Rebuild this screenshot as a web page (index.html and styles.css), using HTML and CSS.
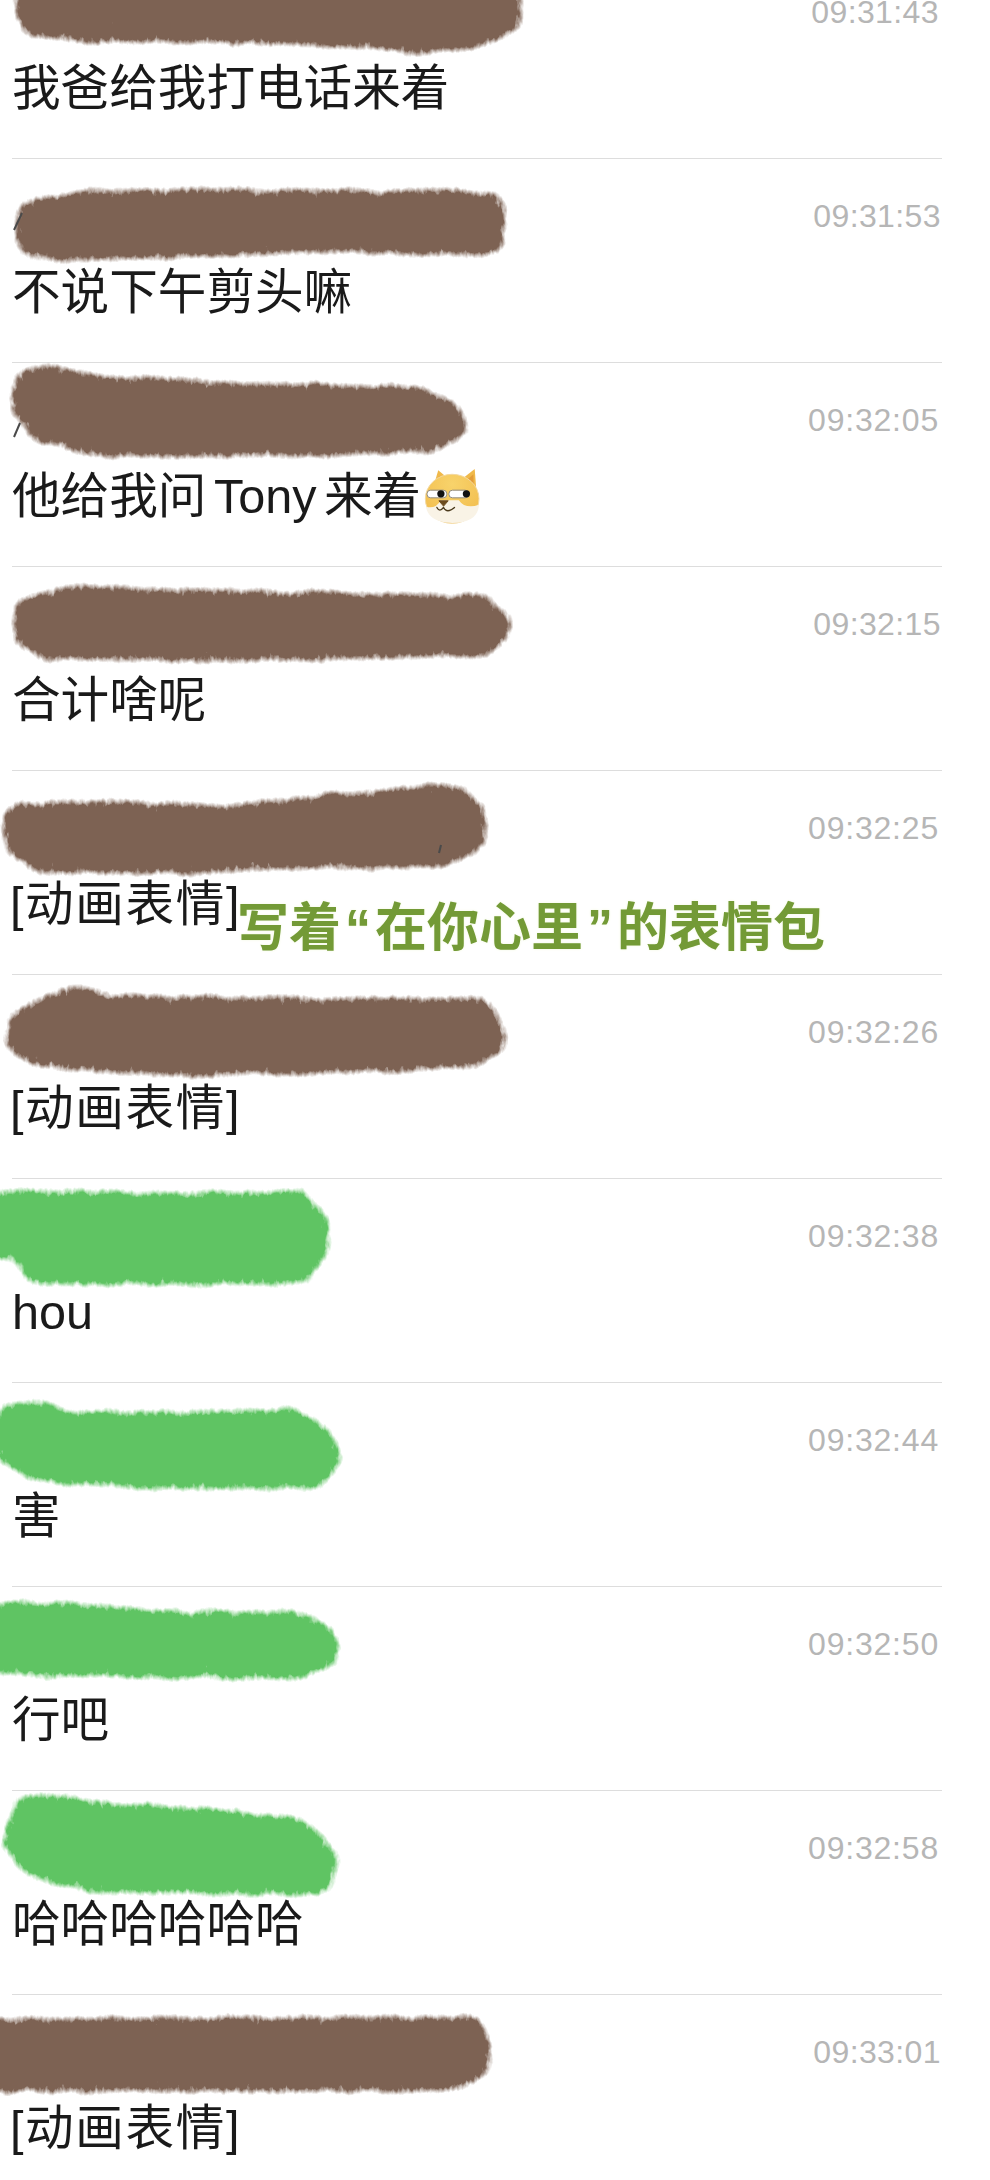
FILE: index.html
```html
<!DOCTYPE html>
<html lang="zh-CN">
<head>
    <meta charset="UTF-8">
    <meta name="viewport" content="width=device-width, initial-scale=1.0">
    <title>聊天记录</title>
    <link rel="stylesheet" href="styles.css">
</head>
<body>
    <!-- shared filter for the painted-over names -->
    <svg class="defs" width="0" height="0" aria-hidden="true">
        <defs>
            <filter id="fur" x="-10%" y="-50%" width="120%" height="200%" color-interpolation-filters="sRGB">
                <feTurbulence type="fractalNoise" baseFrequency="0.05 0.09" numOctaves="2" seed="7" result="wobble"/>
                <feDisplacementMap in="SourceGraphic" in2="wobble" scale="10" xChannelSelector="R" yChannelSelector="G" result="moved"/>
                <feGaussianBlur in="moved" stdDeviation="6" result="soft"/>
                <feTurbulence type="fractalNoise" baseFrequency="0.2 0.1" numOctaves="3" seed="3" result="grain"/>
                <feColorMatrix in="grain" type="matrix" values="0 0 0 0 0  0 0 0 0 0  0 0 0 0 0  1 0 0 0 0" result="grainAlpha"/>
                <feComposite in="soft" in2="grainAlpha" operator="arithmetic" k1="2" k2="0.8" k3="0" k4="-0.3" result="mix"/>
                <feComponentTransfer in="mix" result="mask">
                    <feFuncA type="linear" slope="1.6" intercept="0"/>
                </feComponentTransfer>
                <feMorphology in="SourceGraphic" operator="dilate" radius="20" result="paint"/>
                <feComposite in="paint" in2="mask" operator="in"/>
            </filter>
            <radialGradient id="dogFace" cx="50%" cy="20%" r="75%">
                <stop offset="0" stop-color="#f8d36b"/>
                <stop offset="1" stop-color="#f2bd4e"/>
            </radialGradient>
        </defs>
    </svg>

    <div class="list">
        <div class="row">
            <svg class="smear" viewBox="0 -45 990 204"><polygon class="brown" filter="url(#fur)" points="28,-20 505,-20 505,18 470,32 420,36 300,28 100,26 35,20"/></svg>
            <div class="time time-mid">09:31:43</div>
            <div class="msg">我爸给我打电话来着</div>
        </div>
        <div class="row">
            <svg class="smear" viewBox="0 159 990 204"><polygon class="brown" filter="url(#fur)" points="33,215 100,207 200,205 300,207 488,208 488,240 350,235 60,245 33,240"/><path class="residue" d="M22 213 L14 230"/></svg>
            <div class="time time-wide">09:31:53</div>
            <div class="msg">不说下午剪头嘛</div>
        </div>
        <div class="row">
            <svg class="smear" viewBox="0 363 990 204"><polygon class="brown" filter="url(#fur)" points="30,385 48,380 90,392 200,398 300,400 420,403 450,422 450,428 425,436 300,440 100,440 42,425 27,405"/><path class="residue" d="M20 423 L14 437"/></svg>
            <div class="time">09:32:05</div>
            <div class="msg msg-tight">他给我问 Tony 来着<svg class="dog" viewBox="70 80 175 170">
                <polygon points="100,140 116,86 155,118" fill="#f0b94a"/>
                <polygon points="118,104 110,132 136,118" fill="#e39c38"/>
                <polygon points="178,120 226,82 232,160" fill="#f0b94a"/>
                <polygon points="206,112 222,98 223,138" fill="#e39c38"/>
                <ellipse cx="158" cy="172" rx="81" ry="74" fill="url(#dogFace)" stroke="#f3d9a0" stroke-width="3"/>
                <path d="M79 196 Q108 204 124 176 L178 176 Q198 204 239 190 Q236 244 158 245 Q86 242 79 196Z" fill="#f9f3e6"/>
                <rect x="82" y="146" width="60" height="23" rx="11" fill="#fff" stroke="#8f8a80" stroke-width="3"/>
                <rect x="148" y="146" width="60" height="23" rx="11" fill="#fff" stroke="#8f8a80" stroke-width="3"/>
                <circle cx="124" cy="157" r="11" fill="#111"/>
                <circle cx="201" cy="157" r="11" fill="#111"/>
                <path d="M118 178 L146 178 L132 194Z" fill="#6d4c1e" stroke="#6d4c1e" stroke-width="3" stroke-linejoin="round"/>
                <path d="M112 198 Q120 214 132 198 Q142 218 165 198" fill="none" stroke="#4b3a1c" stroke-width="4" stroke-linecap="round"/>
            </svg></div>
        </div>
        <div class="row">
            <svg class="smear" viewBox="0 567 990 204"><polygon class="brown" filter="url(#fur)" points="30,612 70,602 200,607 400,610 480,612 493,625 493,630 480,640 200,645 50,643 30,632"/></svg>
            <div class="time time-wide">09:32:15</div>
            <div class="msg">合计啥呢</div>
        </div>
        <div class="row">
            <svg class="smear" viewBox="0 771 990 204"><polygon class="brown" filter="url(#fur)" points="20,820 40,817 230,822 330,810 450,800 470,815 470,835 445,850 400,852 300,852 150,858 35,855 18,838"/><path class="residue" d="M441 845 L439 853"/></svg>
            <div class="time">09:32:25</div>
            <div class="msg msg-bracket">[动画表情]</div>
            <div class="note">写着<span class="quote">“</span>在你心里<span class="quote">”</span>的表情包</div>
        </div>
        <div class="row">
            <svg class="smear" viewBox="0 975 990 204"><polygon class="brown" filter="url(#fur)" points="25,1025 50,1012 75,1003 110,1012 300,1014 480,1015 490,1035 490,1040 470,1050 330,1058 150,1060 40,1050 22,1040"/></svg>
            <div class="time">09:32:26</div>
            <div class="msg msg-bracket">[动画表情]</div>
        </div>
        <div class="row">
            <svg class="smear" viewBox="0 1179 990 204"><polygon class="green" filter="url(#fur)" points="-20,1208 296,1208 314,1225 314,1245 296,1268 40,1268 25,1245 -20,1240"/></svg>
            <div class="time">09:32:38</div>
            <div class="msg">hou</div>
        </div>
        <div class="row">
            <svg class="smear" viewBox="0 1383 990 204"><polygon class="green" filter="url(#fur)" points="10,1440 15,1420 35,1417 70,1430 290,1425 316,1440 326,1458 310,1472 150,1472 40,1465 12,1450"/></svg>
            <div class="time">09:32:44</div>
            <div class="msg">害</div>
        </div>
        <div class="row">
            <svg class="smear" viewBox="0 1587 990 204"><polygon class="green" filter="url(#fur)" points="-20,1620 30,1618 180,1627 300,1628 322,1645 322,1652 300,1663 30,1660 -20,1655"/></svg>
            <div class="time">09:32:50</div>
            <div class="msg">行吧</div>
        </div>
        <div class="row">
            <svg class="smear" viewBox="0 1791 990 204"><polygon class="green" filter="url(#fur)" points="18,1840 30,1810 120,1820 220,1825 295,1835 322,1860 318,1878 100,1877 35,1860"/></svg>
            <div class="time">09:32:58</div>
            <div class="msg">哈哈哈哈哈哈</div>
        </div>
        <div class="row">
            <svg class="smear" viewBox="0 1995 990 204"><polygon class="brown" filter="url(#fur)" points="-20,2035 470,2033 475,2060 455,2075 -20,2075"/></svg>
            <div class="time time-wide">09:33:01</div>
            <div class="msg msg-bracket">[动画表情]</div>
        </div>
    </div>
</body>
</html>
```

FILE: styles.css
```css
html, body {
    height: 2180px;
    margin: 0;
    overflow: hidden;
    background-color: #fff;
}
.defs {
    position: absolute;
}
.list {
    margin: -45px 48px 0 12px;
    font-family: "Liberation Sans", "Noto Sans CJK SC", sans-serif;
}
.row {
    position: relative;
    box-sizing: border-box;
    height: 204px;
    padding-top: 39px;
    border-bottom: 1px solid #ddd;
}
.time {
    padding-right: 3px;
    font-size: 32px;
    line-height: 36px;
    letter-spacing: 0.8px;
    text-align: right;
    color: #b6b6b6;
}
.time-mid {
    letter-spacing: 0.4px;
}
.time-wide {
    padding-right: 1px;
    letter-spacing: 0.4px;
}
.msg {
    margin-top: 28px;
    font-size: 48.6px;
    line-height: 60px;
    color: #1a1a1a;
    white-space: nowrap;
}
.msg-tight {
    word-spacing: -6px;
}
.msg-bracket {
    margin-left: -2px;
    letter-spacing: 1.6px;
}
.dog {
    width: 58px;
    height: 57px;
    margin-left: 2px;
    vertical-align: -12px;
}
.note {
    position: absolute;
    left: 225px;
    top: 127px;
    font-family: "Liberation Sans", "Noto Sans CJK SC", sans-serif;
    font-size: 52px;
    font-weight: 700;
    line-height: 60px;
    white-space: nowrap;
    color: #739a36;
    text-shadow: 0 0 3px #f2f8df;
}
.quote {
    padding: 0 4px;
}
/* painted names sit above the row text */
.smear {
    position: absolute;
    left: -12px;
    top: 0;
    width: 990px;
    height: 204px;
    overflow: visible;
    pointer-events: none;
}
.brown {
    fill: #7d6253;
    stroke: #7d6253;
    stroke-width: 27;
    stroke-linejoin: round;
}
.green {
    fill: #5fc463;
    stroke: #5fc463;
    stroke-width: 27;
    stroke-linejoin: round;
}
.residue {
    fill: none;
    stroke: #4a4a4a;
    stroke-width: 2;
}
```
